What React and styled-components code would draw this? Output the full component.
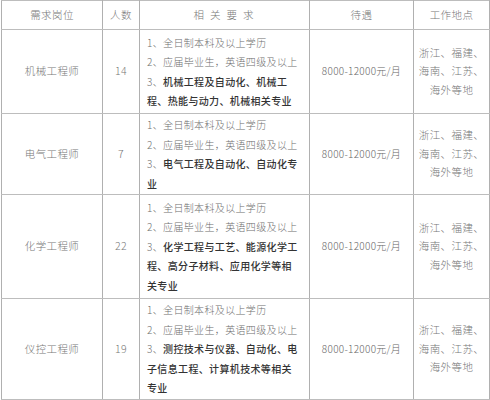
import styled, { createGlobalStyle } from 'styled-components';

const GlobalStyle = createGlobalStyle`
    html, body {
        margin: 0;
        padding: 0;
        background: #FFFFFF;
    }
    body {
        font-family: "Noto Sans CJK SC", "Liberation Serif", sans-serif;
    }
`;

const jobs = [
    {
        title: "机械工程师",
        count: "14",
        height: 84,
        lines: [
            ["1、全日制本科及以上学历"],
            ["2、应届毕业生，英语四级及以上"],
            ["3、", "机械工程及自动化、机械工"],
            ["", "程、热能与动力、机械相关专业"],
        ],
    },
    {
        title: "电气工程师",
        count: "7",
        height: 81,
        lines: [
            ["1、全日制本科及以上学历"],
            ["2、应届毕业生，英语四级及以上"],
            ["3、", "电气工程及自动化、自动化专"],
            ["", "业"],
        ],
    },
    {
        title: "化学工程师",
        count: "22",
        height: 104,
        lines: [
            ["1、全日制本科及以上学历"],
            ["2、应届毕业生，英语四级及以上"],
            ["3、", "化学工程与工艺、能源化学工"],
            ["", "程、高分子材料、应用化学等相"],
            ["", "关专业"],
        ],
    },
    {
        title: "仪控工程师",
        count: "19",
        height: 101,
        lines: [
            ["1、全日制本科及以上学历"],
            ["2、应届毕业生，英语四级及以上"],
            ["3、", "测控技术与仪器、自动化、电"],
            ["", "子信息工程、计算机技术等相关"],
            ["", "专业"],
        ],
    },
];

export default function App() {
    return (
        <>
            <GlobalStyle />
            <Table>
                <colgroup>
                    <col style={{ width: 101 }} />
                    <col style={{ width: 37 }} />
                    <col style={{ width: 170 }} />
                    <col style={{ width: 104 }} />
                    <col style={{ width: 76 }} />
                </colgroup>
                <thead>
                    <Row height={29}>
                        <HeadCell>需求岗位</HeadCell>
                        <HeadCell $dark>人数</HeadCell>
                        <HeadCell $dark $wide>相关要求</HeadCell>
                        <HeadCell $dark>待遇</HeadCell>
                        <HeadCell $dark>工作地点</HeadCell>
                    </Row>
                </thead>
                <tbody>
                    {jobs.map(job => (
                        <Row key={job.title} height={job.height}>
                            <Cell>{job.title}</Cell>
                            <Cell $dark>{job.count}</Cell>
                            <ReqCell $dark>
                                {job.lines.map((line, i) => (
                                    <ReqLine key={i}>
                                        {line[0]}
                                        {line[1] !== undefined && <Strong>{line[1]}</Strong>}
                                    </ReqLine>
                                ))}
                            </ReqCell>
                            <Cell $dark><Salary>8000-12000元/月</Salary></Cell>
                            <Cell $dark>
                                <Place>浙江、福建、</Place>
                                <Place>海南、江苏、</Place>
                                <Place>海外等地</Place>
                            </Cell>
                        </Row>
                    ))}
                </tbody>
            </Table>
        </>
    );
}

const Table = styled.table`
    width: 488px;
    table-layout: fixed;
    border-collapse: collapse;
    margin-left: 1px;
`;

const Row = styled.tr`
    height: ${props => props.height}px;
`;

const Cell = styled.td`
    box-sizing: border-box;
    padding: 0 2px;
    border-top: 1px solid #BDBDBD;
    border-bottom: 1px solid #BDBDBD;
    border-left: 1px solid ${props => props.$dark ? "#2A2A2A" : "#B0B0B0"};
    border-right: 1px solid #B0B0B0;
    text-align: center;
    vertical-align: middle;
    font-size: 10.5px;
    font-weight: 300;
    line-height: 18.5px;
    letter-spacing: 0.4px;
    color: #777777;
`;

const HeadCell = styled(Cell).attrs({ as: "th" })`
    font-weight: 300;
    letter-spacing: ${props => props.$wide ? "6px" : "0.4px"};
    padding-left: ${props => props.$wide ? "6px" : "2px"};
    color: #777777;
`;

const ReqCell = styled(Cell)`
    text-align: left;
    padding: 0 0 0 7px;
    line-height: 19.5px;
    font-size: 10px;
    letter-spacing: 0.35px;
    color: #6E6E6E;
`;

const ReqLine = styled.div`
    white-space: nowrap;
`;

const Strong = styled.span`
    font-weight: 500;
    color: #333333;
`;

const Salary = styled.span`
    font-family: "Noto Sans CJK SC", "Liberation Serif", sans-serif;
    font-size: 10px;
    font-weight: 300;
    letter-spacing: 0.3px;
    color: #666666;
    white-space: nowrap;
`;

const Place = styled.div`
    white-space: nowrap;
`;
